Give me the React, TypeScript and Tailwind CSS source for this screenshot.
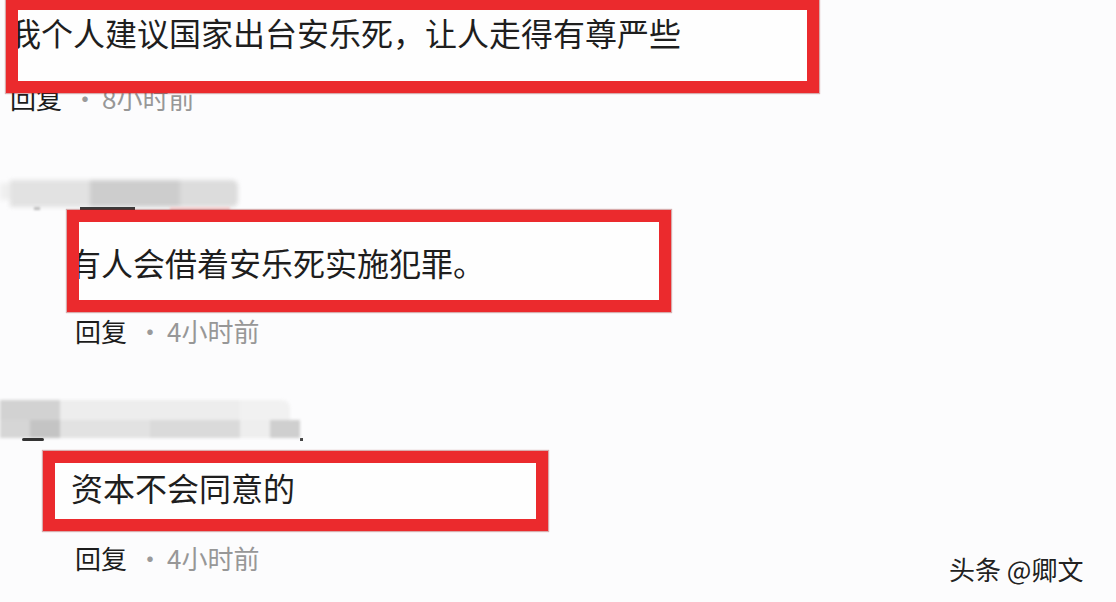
import React from "react";

function Reply({ time, ml }: { time: string; ml: string }) {
  return (
    <div className={`flex items-start text-[26px] leading-[26px] ${ml}`}>
      <span className="text-[#1c1c1c]">回复</span>
      <span className="ml-[10px] w-[26px] text-center text-[#9a9a9a]">·</span>
      <span className="ml-[4px] text-[#979797]">{time}</span>
    </div>
  );
}

export default function App() {
  return (
    <div className="relative w-[1116px] h-[602px] overflow-hidden bg-[#fcfcfd] font-['Noto_Sans_CJK_SC','Noto_Sans',sans-serif] text-[#1e1e1e]">
      {/* Comment 1 */}
      <div className="relative z-10 mt-[-2px] ml-[6px] w-[813px] h-[95px] border-[12px] border-[#eb2a2d] bg-[#fefefe] overflow-hidden shadow-[0_0_1px_1px_rgba(150,20,20,0.35)]">
        <div className="ml-[-9px] mt-[6px] whitespace-nowrap text-[32px] leading-[32px]">
          我个人建议国家出台安乐死，让人走得有尊严些
        </div>
      </div>
      <div className="mt-[-8px]">
        <Reply time="8小时前" ml="ml-[10px]" />
      </div>

      {/* Comment 2 name (blurred) */}
      <div className="mt-[69px] flex flex-col">
        <div className="flex h-[27px] blur-[2px]">
          <div className="w-[10px] mt-[3px] h-[17px] bg-[#efefef]" />
          <div className="w-[80px] bg-[#e2e2e2]" />
          <div className="w-[90px] bg-[#cdcdcd]" />
          <div className="w-[58px] bg-[#dcdcdc] rounded-r-[6px]" />
        </div>
        <div className="flex h-[3px] mt-[0px]">
          <div className="ml-[34px] w-[6px] bg-[#bdbdbd] blur-[1px]" />
          <div className="ml-[40px] w-[55px] bg-[#3a3a3a] blur-[0.5px]" />
          <div className="ml-[35px] w-[60px] bg-[#f3c9c9] blur-[1px]" />
        </div>
      </div>

      {/* Comment 2 */}
      <div className="relative z-10 mt-[0px] ml-[67px] w-[604px] h-[102px] border-[12px] border-[#eb2a2d] bg-[#fefefe] overflow-hidden shadow-[0_0_1px_1px_rgba(150,20,20,0.35)]">
        <div className="ml-[-10px] mt-[24px] whitespace-nowrap text-[32px] leading-[32px]">
          有人会借着安乐死实施犯罪。
        </div>
      </div>
      <div className="mt-[6px]">
        <Reply time="4小时前" ml="ml-[75px]" />
      </div>

      {/* Comment 3 name (blurred) */}
      <div className="mt-[56px] relative w-[304px] h-[38px] blur-[1.5px]">
        <div className="flex h-[20px]">
          <div className="w-[60px] bg-[#d2d2d2]" />
          <div className="w-[180px] bg-[#ededed]" />
          <div className="w-[50px] bg-[#f1f1f1] rounded-tr-[8px]" />
        </div>
        <div className="flex h-[18px]">
          <div className="w-[30px] bg-[#d6d6d6]" />
          <div className="w-[30px] bg-[#c4c4c4]" />
          <div className="w-[90px] bg-[#e2e2e2]" />
          <div className="w-[90px] bg-[#dadada]" />
          <div className="w-[30px] bg-[#eeeeee]" />
          <div className="w-[30px] bg-[#cfcfcf]" />
        </div>
      </div>
      <div className="flex h-[3px]">
        <div className="ml-[22px] w-[22px] bg-[#333] rounded-full blur-[0.5px]" />
        <div className="ml-[256px] w-[3px] bg-[#444]" />
      </div>

      {/* Comment 3 */}
      <div className="relative z-10 mt-[10px] ml-[43px] w-[505px] h-[80px] border-[12px] border-[#eb2a2d] bg-[#fefefe] overflow-hidden shadow-[0_0_1px_1px_rgba(150,20,20,0.35)]">
        <div className="ml-[16px] mt-[8px] whitespace-nowrap text-[32px] leading-[32px]">
          资本不会同意的
        </div>
      </div>
      <div className="mt-[14px]">
        <Reply time="4小时前" ml="ml-[75px]" />
      </div>

      {/* Watermark */}
      <div className="absolute left-[949px] top-[554px] whitespace-nowrap text-[26px] leading-[30px] text-[#222] [text-shadow:1px_1px_0_#ffffff,-1px_0_0_#ffffff]">
        头条 @卿文
      </div>
    </div>
  );
}
